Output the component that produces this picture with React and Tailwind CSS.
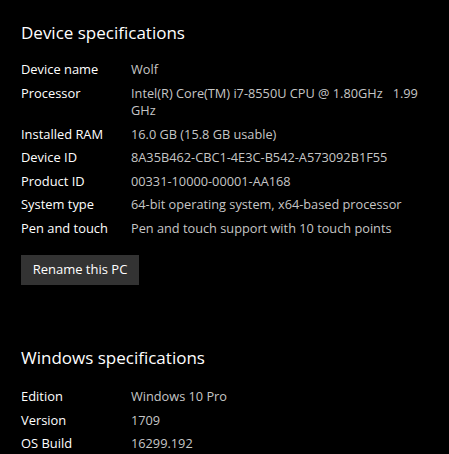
export default function App() {
  const device = [
    ["Device name", "Wolf"],
    ["Processor", "Intel(R) Core(TM) i7-8550U CPU @ 1.80GHz   1.99\nGHz"],
    ["Installed RAM", "16.0 GB (15.8 GB usable)"],
    ["Device ID", "8A35B462-CBC1-4E3C-B542-A573092B1F55"],
    ["Product ID", "00331-10000-00001-AA168"],
    ["System type", "64-bit operating system, x64-based processor"],
    ["Pen and touch", "Pen and touch support with 10 touch points"],
  ];
  const win = [
    ["Edition", "Windows 10 Pro"],
    ["Version", "1709"],
    ["OS Build", "16299.192"],
  ];
  const Rows = ({ rows }) => (
    <div className="flex flex-col gap-[6px] leading-[17.5px]">
      {rows.map(([k, v]) => (
        <div key={k} className="flex">
          <div className="w-[110px] shrink-0 text-white text-[12.9px]">{k}</div>
          <div className="text-[#c6c6c6] text-[12.75px] whitespace-pre-wrap">{v}</div>
        </div>
      ))}
    </div>
  );
  return (
    <div
      className="w-[449px] h-[454px] bg-black overflow-hidden px-[21px] pt-[21px]"
      style={{ fontFamily: '"Open Sans", "Noto Sans", sans-serif' }}
    >
      <h2 className="text-white text-[17px] leading-[24px] mb-[16px]">Device specifications</h2>
      <Rows rows={device} />
      <button className="mt-[18px] bg-[#333333] text-white text-[13px] h-[30px] w-[118px] block">
        Rename this PC
      </button>
      <h2 className="text-white text-[17px] leading-[24px] mt-[61px] mb-[18px]">Windows specifications</h2>
      <Rows rows={win} />
    </div>
  );
}
